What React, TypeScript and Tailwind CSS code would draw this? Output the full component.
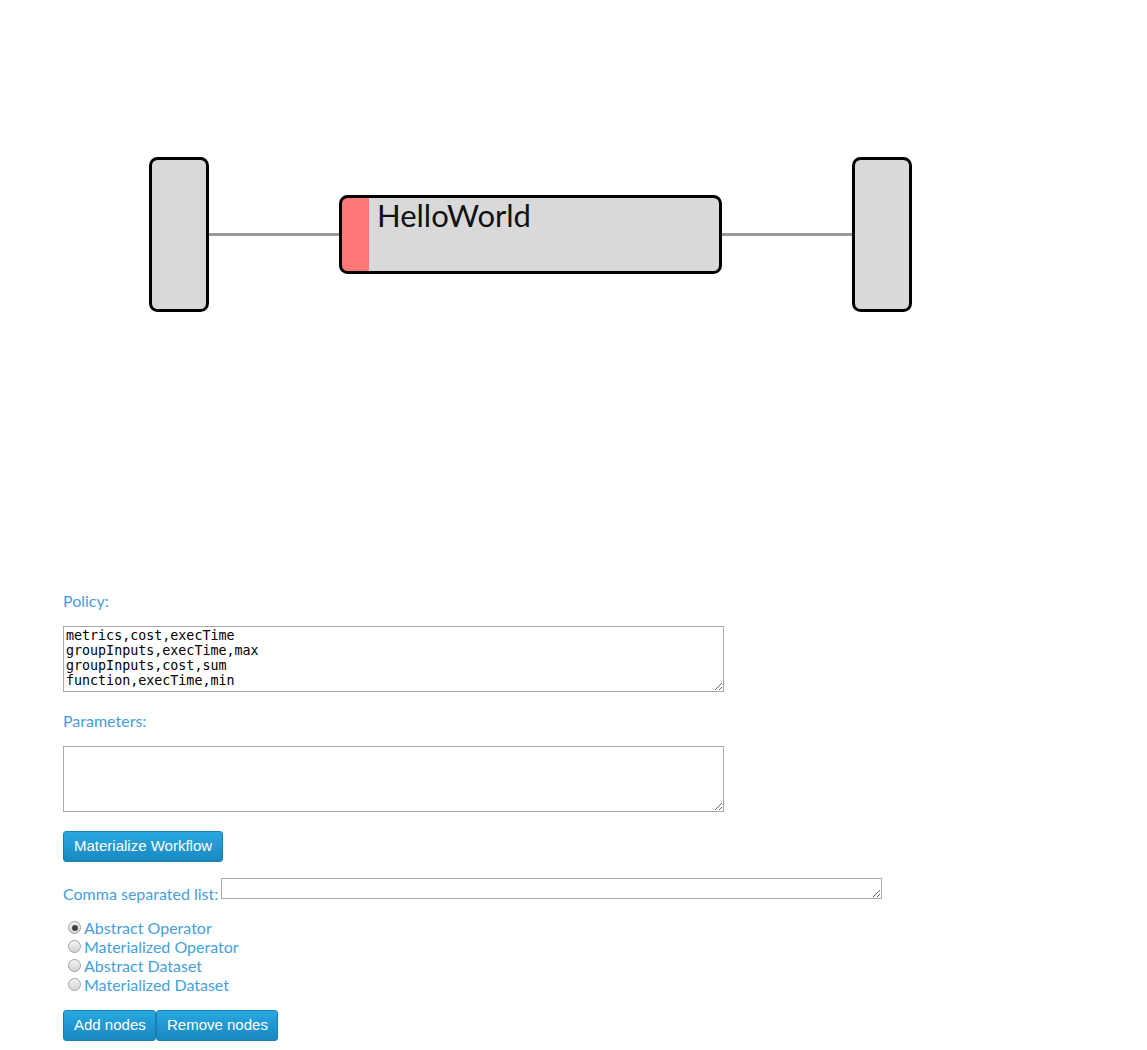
import React, { useState } from 'react';

const nodeTypes = ['Abstract Operator', 'Materialized Operator', 'Abstract Dataset', 'Materialized Dataset'];

const policyText = `metrics,cost,execTime
groupInputs,execTime,max
groupInputs,cost,sum
function,execTime,min`;

const btn =
  "h-[31px] px-[10px] whitespace-nowrap text-[15px] text-white font-['Liberation_Sans',Arial,sans-serif] rounded-[3px] border border-[#1b7fb4] bg-gradient-to-b from-[#27a8e2] to-[#1a88c0]";

const Graph = () => (
  <svg width="1147" height="580" viewBox="0 0 1147 580" className="block">
    <line x1="208" y1="234.5" x2="340" y2="234.5" stroke="#999" strokeWidth="3" />
    <line x1="721" y1="234.5" x2="853" y2="234.5" stroke="#999" strokeWidth="3" />
    <rect x="150.5" y="158.5" width="57" height="152" rx="7" fill="#d9d9d9" stroke="#000" strokeWidth="3" />
    <rect x="853.5" y="158.5" width="57" height="152" rx="7" fill="#d9d9d9" stroke="#000" strokeWidth="3" />
    <rect x="340.5" y="196.5" width="380" height="76" rx="7" fill="#d9d9d9" />
    <path d="M347.5 196.5 H369 V272.5 H347.5 A7 7 0 0 1 340.5 265.5 V203.5 A7 7 0 0 1 347.5 196.5 Z" fill="#ff7777" />
    <rect x="340.5" y="196.5" width="380" height="76" rx="7" fill="none" stroke="#000" strokeWidth="3" />
    <text x="377" y="227" fontSize="31" fill="#111" fontFamily="Lato, 'Open Sans', sans-serif">
      HelloWorld
    </text>
  </svg>
);

const App = () => {
  const [nodeType, setNodeType] = useState('Abstract Operator');

  return (
    <div className="bg-white min-h-[1050px] font-['Lato',sans-serif] text-[16px] text-[#449fdc]">
      <Graph />
      <div className="pl-[63px] pt-[10px] flex flex-col items-start">
        <label className="leading-[21px]">Policy:</label>
        <textarea
          defaultValue={policyText}
          className="mt-[15px] w-[661px] h-[66px] border border-[#a9a9a9] px-[2px] py-[1px] text-black text-[13.33px] leading-[15px] font-['DejaVu_Sans_Mono',monospace] outline-none"
        />
        <label className="mt-[18px] leading-[21px]">Parameters:</label>
        <textarea className="mt-[15px] w-[661px] h-[66px] border border-[#a9a9a9] px-[2px] py-[2px] text-black text-[13px] font-['DejaVu_Sans_Mono',monospace] outline-none" />
        <button className={`mt-[19px] ${btn}`}>Materialize Workflow</button>
        <div className="mt-[16px] flex items-start">
          <span className="leading-[21px] mt-[5px]">Comma separated list:</span>
          <textarea className="ml-[3px] w-[661px] h-[21px] border border-[#a9a9a9] text-black text-[13px] leading-[15px] font-['DejaVu_Sans_Mono',monospace] outline-none" />
        </div>
        <div className="mt-[14px] flex flex-col">
          {nodeTypes.map((t) => (
            <label key={t} className="flex items-center h-[19px] cursor-pointer" onClick={() => setNodeType(t)}>
              <span className="ml-[5px] mr-[3px] w-[13px] h-[13px] rounded-full border border-[#a0a0a0] bg-gradient-to-b from-[#f4f4f4] to-[#d4d4d4] flex items-center justify-center">
                {nodeType === t && <span className="w-[6px] h-[6px] rounded-full bg-[#444]" />}
              </span>
              <span className="leading-[19px]">{t}</span>
            </label>
          ))}
        </div>
        <div className="mt-[16px] flex">
          <button className={`${btn} w-[93px] px-0`}>Add nodes</button>
          <button className={`${btn} w-[122px] px-0`}>Remove nodes</button>
        </div>
      </div>
    </div>
  );
};

export default App;
